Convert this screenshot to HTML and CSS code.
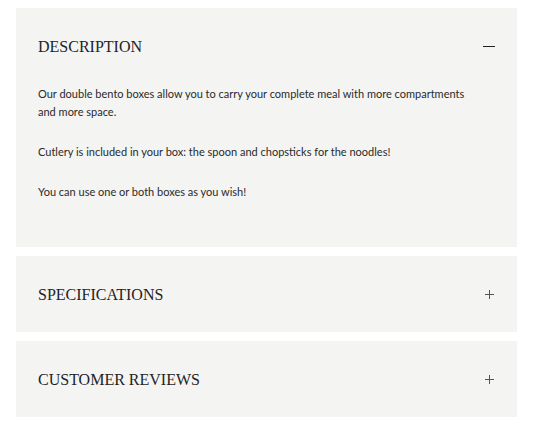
FILE: index.html
```html
<!DOCTYPE html>
<html lang="en">
<head>
  <meta charset="UTF-8" />
  <meta name="viewport" content="width=device-width, initial-scale=1.0"/>
  <title>Product details</title>
  <link rel="stylesheet" href="styles.css">
</head>
<body>

  <div class="accordion">
    <div class="panel open">
      <div class="panel-head">
        <h3>Description</h3>
        <span class="toggle minus"></span>
      </div>
      <div class="panel-body">
        <p>Our double bento boxes allow you to carry your complete meal with more compartments and more space.</p>
        <p>Cutlery is included in your box: the spoon and chopsticks for the noodles!</p>
        <p>You can use one or both boxes as you wish!</p>
      </div>
    </div>

    <div class="panel">
      <div class="panel-head">
        <h3>Specifications</h3>
        <span class="toggle plus"></span>
      </div>
    </div>

    <div class="panel">
      <div class="panel-head">
        <h3>Customer Reviews</h3>
        <span class="toggle plus"></span>
      </div>
    </div>
  </div>

</body>
</html>
```

FILE: styles.css
```css
* {
  margin: 0;
  padding: 0;
  box-sizing: border-box;
}

body {
  background-color: #fff;
  color: #222;
  font-family: 'Lato', sans-serif;
}

.accordion {
  width: 501px;
  margin: 8px 0 0 16px;
  display: flex;
  flex-direction: column;
  gap: 9px;
}

.panel {
  background-color: #f4f4f2;
}

.panel-head {
  display: flex;
  align-items: center;
  justify-content: space-between;
  padding: 1px 22px 0;
  height: 76px;
}

h3 {
  font-family: 'Liberation Serif', serif;
  font-weight: normal;
  font-size: 16px;
  text-transform: uppercase;
  color: #1f2326;
}

.toggle {
  position: relative;
  width: 12px;
  height: 12px;
}

.toggle::before,
.toggle::after {
  content: "";
  position: absolute;
  background-color: #555;
}

.minus::before {
  left: 0;
  right: 0;
  top: 5px;
  height: 1px;
  background-color: #1f2326;
}

.plus::before {
  left: 2px;
  right: 1px;
  top: 5px;
  height: 1px;
}

.plus::after {
  top: 1px;
  height: 9px;
  left: 6px;
  width: 1px;
}

.panel-body {
  padding: 1px 40px 46px 22px;
  font-size: 11px;
  line-height: 18px;
  color: #2a2a2a;
}

.panel-body p + p {
  margin-top: 22px;
}
```
